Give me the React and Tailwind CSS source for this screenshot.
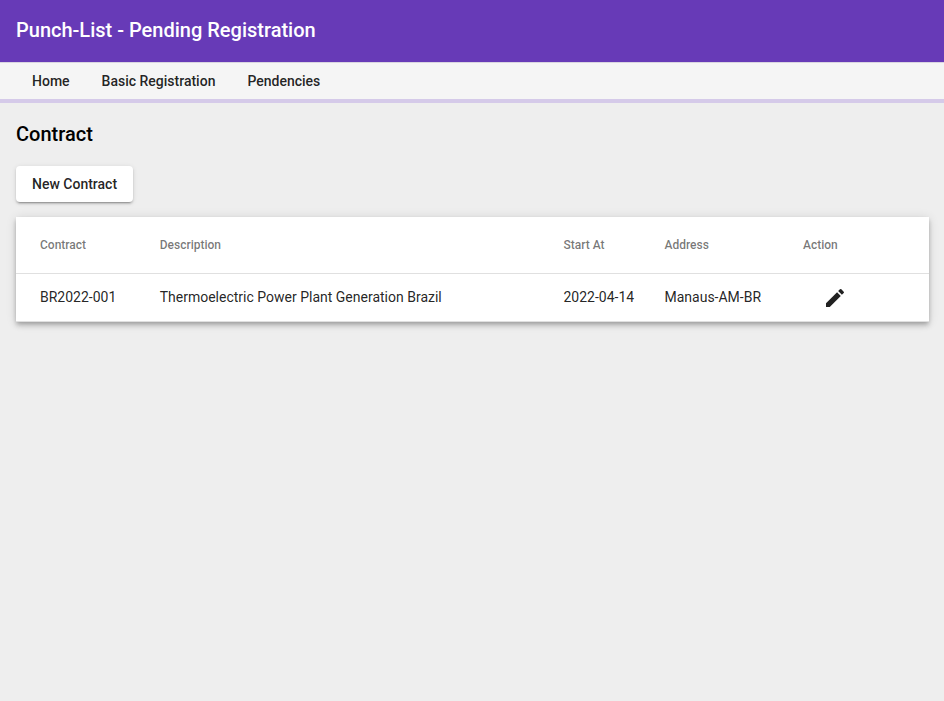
const columns = ["Contract", "Description", "Start At", "Address", "Action"];
const grid = "grid grid-cols-[119.7px_403.8px_101px_138.5px_1fr] items-center px-6";

export default function App() {
  return (
    <div className="min-h-screen bg-[#eeeeee] font-['Roboto',sans-serif] text-sm text-black/87">
      <header className="flex h-[62px] items-center bg-[#673ab7] px-4 pb-0.5 text-xl font-medium text-white">
        Punch-List - Pending Registration
      </header>
      <nav className="flex h-[41px] items-center gap-8 border-t border-b-4 border-t-[#d9d5e0] border-b-[#d5cae9] bg-[#f5f5f5] px-8 pb-px font-medium">
        <a>Home</a>
        <a>Basic Registration</a>
        <a>Pendencies</a>
      </nav>
      <main className="pl-4 pr-[15px] pt-[15px]">
        <h1 className="h-8 text-xl leading-8 font-medium text-black">Contract</h1>
        <button className="mt-4 block h-9 rounded bg-white px-4 font-medium leading-9 shadow-[0_3px_1px_-2px_rgba(0,0,0,.2),0_2px_2px_0_rgba(0,0,0,.14),0_1px_5px_0_rgba(0,0,0,.12)]">
          New Contract
        </button>
        <section className="mt-[15px] bg-white shadow-[0_2px_4px_-1px_rgba(0,0,0,.2),0_4px_5px_0_rgba(0,0,0,.14),0_1px_10px_0_rgba(0,0,0,.12)]">
          <div className={`${grid} h-[57px] border-b border-black/12 text-xs font-medium text-black/54`}>
            {columns.map((c) => (
              <span key={c}>{c}</span>
            ))}
          </div>
          <div className={`${grid} h-12 border-b border-black/12 pb-0.5`}>
            <span>BR2022-001</span>
            <span>Thermoelectric Power Plant Generation Brazil</span>
            <span>2022-04-14</span>
            <span>Manaus-AM-BR</span>
            <button className="ml-5 w-6 pt-0.5" aria-label="Edit">
              <svg className="size-6" viewBox="0 0 24 24" fill="currentColor">
                <path d="M3 17.25V21h3.75L17.81 9.94l-3.75-3.75L3 17.25zM20.71 7.04a.996.996 0 0 0 0-1.41l-2.34-2.34a.996.996 0 0 0-1.41 0l-1.83 1.83 3.75 3.75 1.83-1.83z" />
              </svg>
            </button>
          </div>
        </section>
      </main>
    </div>
  );
}
